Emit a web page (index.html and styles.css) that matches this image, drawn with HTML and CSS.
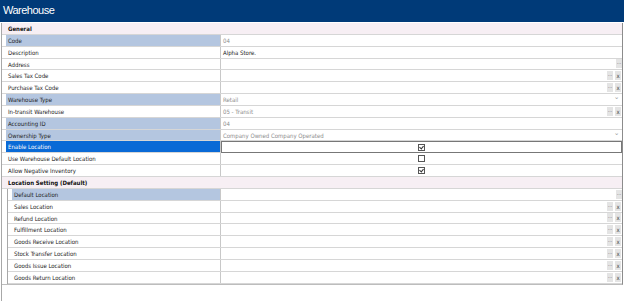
FILE: index.html
```html
<!DOCTYPE html>
<html lang="en">
<head>
    <meta charset="UTF-8">
    <title>Warehouse</title>
    <link rel="stylesheet" href="styles.css">
</head>
<body>
    <div class="title">Warehouse</div>

    <div class="panel">
        <div class="grid">
            <div class="section">General</div>

            <div class="row">
                <div class="label hl">Code</div>
                <div class="value muted">04</div>
            </div>
            <div class="row">
                <div class="label">Description</div>
                <div class="value">Alpha Store.</div>
            </div>
            <div class="row">
                <div class="label">Address</div>
                <div class="value"><span class="fill"></span><span class="btn">&middot;&middot;&middot;</span></div>
            </div>
            <div class="row">
                <div class="label">Sales Tax Code</div>
                <div class="value"><span class="fill"></span><span class="btn">&middot;&middot;&middot;</span><span class="btn x">x</span></div>
            </div>
            <div class="row">
                <div class="label">Purchase Tax Code</div>
                <div class="value"><span class="fill"></span><span class="btn">&middot;&middot;&middot;</span><span class="btn x">x</span></div>
            </div>
            <div class="row">
                <div class="label hl">Warehouse Type</div>
                <div class="value muted"><span class="fill">Retail</span><span class="arrow">&#8964;</span></div>
            </div>
            <div class="row">
                <div class="label">In-transit Warehouse</div>
                <div class="value muted"><span class="fill">05 - Transit</span><span class="btn">&middot;&middot;&middot;</span><span class="btn x">x</span></div>
            </div>
            <div class="row">
                <div class="label hl">Accounting ID</div>
                <div class="value muted">04</div>
            </div>
            <div class="row">
                <div class="label hl">Ownership Type</div>
                <div class="value muted"><span class="fill">Company Owned Company Operated</span><span class="arrow">&#8964;</span></div>
            </div>
            <div class="row">
                <div class="label active">Enable Location</div>
                <div class="value check focus"><span class="box on"></span></div>
            </div>
            <div class="row">
                <div class="label">Use Warehouse Default Location</div>
                <div class="value check"><span class="box"></span></div>
            </div>
            <div class="row">
                <div class="label">Allow Negative Inventory</div>
                <div class="value check"><span class="box on"></span></div>
            </div>

            <div class="section">Location Setting (Default)</div>

            <div class="sub">
                <div class="row">
                    <div class="label hl">Default Location</div>
                    <div class="value"><span class="fill"></span><span class="btn">&middot;&middot;&middot;</span></div>
                </div>
                <div class="row">
                    <div class="label">Sales Location</div>
                    <div class="value"><span class="fill"></span><span class="btn">&middot;&middot;&middot;</span><span class="btn x">x</span></div>
                </div>
                <div class="row">
                    <div class="label">Refund Location</div>
                    <div class="value"><span class="fill"></span><span class="btn">&middot;&middot;&middot;</span><span class="btn x">x</span></div>
                </div>
                <div class="row">
                    <div class="label">Fulfillment Location</div>
                    <div class="value"><span class="fill"></span><span class="btn">&middot;&middot;&middot;</span><span class="btn x">x</span></div>
                </div>
                <div class="row">
                    <div class="label">Goods Receive Location</div>
                    <div class="value"><span class="fill"></span><span class="btn">&middot;&middot;&middot;</span><span class="btn x">x</span></div>
                </div>
                <div class="row">
                    <div class="label">Stock Transfer Location</div>
                    <div class="value"><span class="fill"></span><span class="btn">&middot;&middot;&middot;</span><span class="btn x">x</span></div>
                </div>
                <div class="row">
                    <div class="label">Goods Issue Location</div>
                    <div class="value"><span class="fill"></span><span class="btn">&middot;&middot;&middot;</span><span class="btn x">x</span></div>
                </div>
                <div class="row">
                    <div class="label">Goods Return Location</div>
                    <div class="value"><span class="fill"></span><span class="btn">&middot;&middot;&middot;</span><span class="btn x">x</span></div>
                </div>
            </div>
        </div>
    </div>
</body>
</html>
```

FILE: styles.css
```css
body {
    margin: 0;
    padding: 0;
    background-color: #fff;
    font-family: "DejaVu Sans Condensed", "DejaVu Sans", Tahoma, sans-serif;
    font-size: 6px;
    color: #222;
}
.title {
    height: 22px;
    line-height: 21px;
    padding-left: 3px;
    background-color: #003a78;
    color: #fff;
    font-family: "Liberation Sans", Arial, sans-serif;
    font-size: 11px;
    letter-spacing: -0.5px;
    margin-bottom: 1px;
}
.panel {
    height: 278px;
    margin-left: 1px;
    border-left: 1px solid #a8a8a8;
}
.grid {
    width: 620px;
    border-right: 1px solid #8c8c8c;
    border-bottom: 1px solid #bdbdbd;
}
.section {
    height: 10.85px;
    line-height: 11px;
    padding-left: 6px;
    background-color: #f7eff4;
    border-bottom: 1px solid #d6d6d6;
    font-weight: bold;
    color: #111;
}
.row {
    display: flex;
    height: 10.85px;
    line-height: 11px;
    border-bottom: 1px solid #d6d6d6;
    padding-left: 4px;
}
.sub {
    margin-left: 5px;
    border-left: 1px solid #a8a8a8;
}
.label {
    width: 212px;
    padding-left: 2px;
    border-right: 1px solid #c8c8c8;
    white-space: nowrap;
    overflow: hidden;
}
.sub .label {
    width: 206px;
}
.label.hl {
    background-color: #b4c6e0;
}
.label.active {
    background-color: #0a6ad6;
    color: #fff;
}
.value {
    flex: 1;
    display: flex;
    align-items: center;
    padding-left: 2px;
    white-space: nowrap;
}
.value.muted {
    color: #8c8c8c;
}
.value.check {
    justify-content: center;
    padding-left: 0;
}
.value.focus {
    border: 1px solid #777;
    margin-bottom: -1px;
    box-sizing: border-box;
    height: 11.85px;
}
.fill {
    flex: 1;
}
.btn {
    width: 6px;
    height: 9px;
    line-height: 9px;
    margin-left: 2px;
    background-color: #e4e4e4;
    color: #444;
    font-size: 5px;
    text-align: center;
}
.btn.x {
    margin-right: 1px;
    margin-left: 2px;
    font-size: 6px;
}
.arrow {
    width: 8px;
    color: #999;
    font-size: 7px;
    line-height: 7px;
    margin-top: -3px;
}
.box {
    width: 5px;
    height: 5px;
    border: 1px solid #555;
    background-color: #fff;
    position: relative;
}
.box.on::after {
    content: "";
    position: absolute;
    left: 1px;
    top: 0;
    width: 2px;
    height: 3px;
    border-right: 1px solid #333;
    border-bottom: 1px solid #333;
    transform: rotate(40deg);
}
```
